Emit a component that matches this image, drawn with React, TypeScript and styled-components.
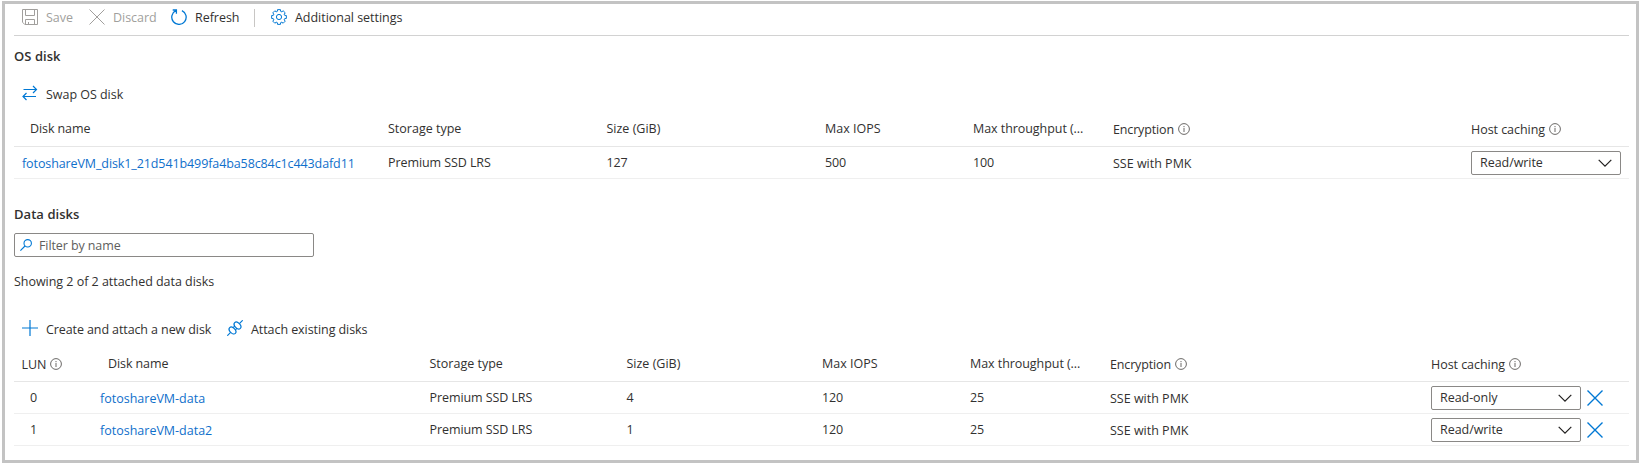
import React from "react";
import styled, { createGlobalStyle } from "styled-components";

const ink = "#323130";
const blue = "#0078d4";
const grey = "#a19f9d";

const GlobalStyle = createGlobalStyle`
  body { margin: 0; background: #fff; }
  * { box-sizing: border-box; }
`;

const Frame = styled.main`
  width: 1637px;
  height: 462px;
  margin: 1px 0 0 2px;
  padding: 0 7px 0 9px;
  border: 3px solid #c3c3c3;
  background: #fff;
  color: ${ink};
  font-family: "Open Sans", "Noto Sans", sans-serif;
  font-size: 12.5px;
  line-height: 18px;
  display: flow-root;
  overflow: hidden;
`;

const Toolbar = styled.div`
  display: flex;
  align-items: center;
  height: 32px;
  padding-bottom: 3px;
  border-bottom: 1px solid #d2d2d2;
`;

const Command = styled.button<{ $width?: number; $tracking?: number }>`
  display: flex;
  align-items: center;
  gap: 8px;
  width: ${(p) => (p.$width ? `${p.$width}px` : "auto")};
  padding: 0 0 0 8px;
  border: 0;
  background: none;
  color: ${ink};
  font: inherit;
  letter-spacing: ${(p) => p.$tracking ?? -0.03}px;
  white-space: nowrap;
  &:disabled { color: ${grey}; }
`;

const Glyph = styled.svg`
  display: block;
  flex: none;
  width: 16px;
  height: 16px;
  margin-top: -2px;
  fill: none;
  stroke: ${blue};
  button:disabled & { stroke: ${grey}; }
`;

const CommandBar = styled.div<{ $gap: number }>`
  display: flex;
  align-items: center;
  height: 36px;
  margin-top: ${(p) => p.$gap}px;
  padding-top: 2px;
  ${Glyph} { margin-top: -4px; }
`;

const Separator = styled.span`
  width: 1px;
  height: 18px;
  margin: 0 8px;
  background: #c8c6c4;
`;

const Heading = styled.h2<{ $gap: number }>`
  margin: ${(p) => p.$gap}px 0 0;
  font-size: 13px;
  font-weight: 600;
  line-height: 18px;
  letter-spacing: 0.05px;
`;

const FilterBox = styled.label`
  display: flex;
  align-items: center;
  gap: 7px;
  width: 300px;
  height: 24px;
  margin-top: 10px;
  padding-left: 5px;
  border: 1px solid #8a8886;
  border-radius: 2px;
`;

const FilterGlyph = styled(Glyph)`
  width: 12px;
  height: 12px;
  margin-top: 0;
`;

const FilterInput = styled.input`
  flex: 1;
  min-width: 0;
  height: 20px;
  padding: 0;
  border: 0;
  outline: 0;
  background: transparent;
  font: inherit;
  letter-spacing: -0.1px;
  &::placeholder { color: #605e5c; opacity: 1; }
`;

const Count = styled.p`
  margin: 16px 0 0;
  letter-spacing: -0.03px;
`;

const Row = styled.div<{ $columns: string; $header?: boolean }>`
  display: grid;
  grid-template-columns: ${(p) => p.$columns};
  align-items: start;
  height: ${(p) => (p.$header ? 35 : 32)}px;
  padding-top: ${(p) => (p.$header ? 8 : 7)}px;
  border-bottom: 1px solid ${(p) => (p.$header ? "#e6e6e6" : "#efefef")};
`;

const Cell = styled.div<{ $inset?: number; $drop?: boolean; $tracking?: number }>`
  display: flex;
  align-items: center;
  height: 18px;
  margin-top: ${(p) => (p.$drop ? 1 : 0)}px;
  padding-left: ${(p) => p.$inset ?? 0}px;
  letter-spacing: ${(p) => p.$tracking ?? 0}px;
  white-space: nowrap;
`;

const DiskLink = styled.a`
  color: #0f6fcb;
  text-decoration: none;
`;

const InfoGlyph = styled.svg`
  flex: none;
  width: 12px;
  height: 12px;
  margin: -2px 0 0 4px;
  fill: none;
  stroke: #6b6967;
`;

const CacheCell = styled.div`
  display: flex;
  align-items: center;
  gap: 6px;
  height: 24px;
  margin-top: -3px;
`;

const Select = styled.button`
  display: flex;
  align-items: center;
  justify-content: space-between;
  width: 150px;
  height: 24px;
  padding: 0 8px;
  border: 1px solid #8a8886;
  border-radius: 2px;
  background: #fff;
  color: ${ink};
  font: inherit;
  letter-spacing: -0.05px;
`;

const Chevron = styled.svg`
  width: 14px;
  height: 8px;
  fill: none;
  stroke: #201f1e;
  stroke-width: 1.2;
`;

const RemoveButton = styled.button`
  padding: 0;
  border: 0;
  background: none;
`;

const RemoveGlyph = styled(Glyph)`
  margin: 0;
  stroke-width: 1.4;
`;

const Info = () => (
  <InfoGlyph viewBox="0 0 12 12">
    <circle cx="6" cy="6" r="5.4" />
    <path d="M6 5v4M6 3v1.2" />
  </InfoGlyph>
);

const gearPoints = Array.from({ length: 8 }, (_, i) => {
  const base = (i * Math.PI) / 4;
  return [
    [-0.28, 5.9],
    [-0.2, 7.5],
    [0.2, 7.5],
    [0.28, 5.9],
  ]
    .map(([a, r]) => `${(8 + r * Math.sin(base + a)).toFixed(2)},${(8 - r * Math.cos(base + a)).toFixed(2)}`)
    .join(" ");
}).join(" ");

const CacheSelect = ({ value }: { value: string }) => (
  <Select type="button">
    {value}
    <Chevron viewBox="0 0 14 8">
      <path d="M.7.9 7 7.1 13.3.9" />
    </Chevron>
  </Select>
);

const osColumns = "374px 218.5px 218.5px 148px 140px 358px 1fr";
const dataColumns = "86px 329.5px 197px 195.5px 148px 140px 321px 1fr";

const MetricHeaders = () => (
  <>
    <Cell>Storage type</Cell>
    <Cell>Size (GiB)</Cell>
    <Cell>Max IOPS</Cell>
    <Cell $tracking={-0.06}>Max throughput (...</Cell>
    <Cell $drop $tracking={-0.15}>Encryption<Info /></Cell>
    <Cell $drop $tracking={-0.05}>Host caching<Info /></Cell>
  </>
);

type Disk = { name: string; size: string; iops: string; throughput: string; caching: string };

const osDisk: Disk = {
  name: "fotoshareVM_disk1_21d541b499fa4ba58c84c1c443dafd11",
  size: "127",
  iops: "500",
  throughput: "100",
  caching: "Read/write",
};

const dataDisks: Disk[] = [
  { name: "fotoshareVM-data", size: "4", iops: "120", throughput: "25", caching: "Read-only" },
  { name: "fotoshareVM-data2", size: "1", iops: "120", throughput: "25", caching: "Read/write" },
];

const MetricCells = ({ disk }: { disk: Disk }) => (
  <>
    <Cell $tracking={-0.08}>Premium SSD LRS</Cell>
    <Cell $tracking={-0.1}>{disk.size}</Cell>
    <Cell $tracking={-0.1}>{disk.iops}</Cell>
    <Cell $tracking={-0.1}>{disk.throughput}</Cell>
    <Cell $drop>SSE with PMK</Cell>
  </>
);

export default function App() {
  return (
    <>
      <GlobalStyle />
      <Frame>
        <Toolbar>
          <Command disabled $width={67}>
            <Glyph viewBox="0 0 16 16">
              <path d="M.5.5h15v15H2.8L.5 13.2zM3.5.5v6h9v-6M3.5 15.5v-5h9v5M6.5 15.5v-2.5" />
            </Glyph>
            Save
          </Command>
          <Command disabled $width={82}>
            <Glyph viewBox="0 0 16 16">
              <path d="M.5.5l15 15M15.5.5l-15 15" />
            </Glyph>
            Discard
          </Command>
          <Command $width={83}>
            <Glyph viewBox="0 0 16 16" strokeWidth="1.3">
              <path d="M10.9 1.6A7.2 7.2 0 1 1 4.8 1.7M1.7 1h3.7v3.7" />
            </Glyph>
            Refresh
          </Command>
          <Separator />
          <Command>
            <Glyph viewBox="0 0 16 16">
              <polygon points={gearPoints} strokeLinejoin="round" />
              <circle cx="8" cy="8" r="2.6" />
            </Glyph>
            Additional settings
          </Command>
        </Toolbar>

        <Heading $gap={11}>OS disk</Heading>
        <CommandBar $gap={11}>
          <Command>
            <Glyph viewBox="0 0 16 16" strokeWidth="1.2">
              <path d="M1.5 4.5h13M11 1l3.5 3.5L11 8M14 11.5H1M4.5 8L1 11.5 4.5 15" />
            </Glyph>
            Swap OS disk
          </Command>
        </CommandBar>
        <Row $columns={osColumns} $header>
          <Cell $inset={16} $tracking={-0.1}>Disk name</Cell>
          <MetricHeaders />
        </Row>
        <Row $columns={osColumns}>
          <Cell $inset={8} $drop $tracking={-0.1}>
            <DiskLink>{osDisk.name}</DiskLink>
          </Cell>
          <MetricCells disk={osDisk} />
          <CacheCell>
            <CacheSelect value={osDisk.caching} />
          </CacheCell>
        </Row>

        <Heading $gap={26}>Data disks</Heading>
        <FilterBox>
          <FilterGlyph viewBox="0 0 12 12" strokeWidth="1.1">
            <circle cx="7.7" cy="4.3" r="3.7" />
            <path d="M5 7 .4 11.6" />
          </FilterGlyph>
          <FilterInput placeholder="Filter by name" />
        </FilterBox>
        <Count>Showing 2 of 2 attached data disks</Count>

        <CommandBar $gap={20}>
          <Command $width={205} $tracking={-0.1}>
            <Glyph viewBox="0 0 16 16" strokeWidth="1.2">
              <path d="M8 0v16M0 8h16" />
            </Glyph>
            Create and attach a new disk
          </Command>
          <Command $tracking={-0.07}>
            <Glyph viewBox="0 0 16 16" strokeWidth="1.2">
              <path d="M.3 15.7l3.3-3.3M12.4 3.6L15.7.3M6.2 7.6l1.7-1.7M8.4 9.8l1.7-1.7" />
              <ellipse cx="5.5" cy="10.5" rx="2.6" ry="4" transform="rotate(-45 5.5 10.5)" />
              <ellipse cx="10.5" cy="5.5" rx="2.6" ry="4" transform="rotate(-45 10.5 5.5)" />
            </Glyph>
            Attach existing disks
          </Command>
        </CommandBar>
        <Row $columns={dataColumns} $header>
          <Cell $inset={7.5} $drop $tracking={-0.1}>LUN<Info /></Cell>
          <Cell $inset={8} $tracking={-0.1}>Disk name</Cell>
          <MetricHeaders />
        </Row>
        {dataDisks.map((disk, lun) => (
          <Row key={disk.name} $columns={dataColumns}>
            <Cell $inset={16}>{lun}</Cell>
            <Cell $drop>
              <DiskLink>{disk.name}</DiskLink>
            </Cell>
            <MetricCells disk={disk} />
            <CacheCell>
              <CacheSelect value={disk.caching} />
              <RemoveButton aria-label="Detach disk">
                <RemoveGlyph viewBox="0 0 16 16">
                  <path d="M.5.5l15 15M15.5.5l-15 15" />
                </RemoveGlyph>
              </RemoveButton>
            </CacheCell>
          </Row>
        ))}
      </Frame>
    </>
  );
}
